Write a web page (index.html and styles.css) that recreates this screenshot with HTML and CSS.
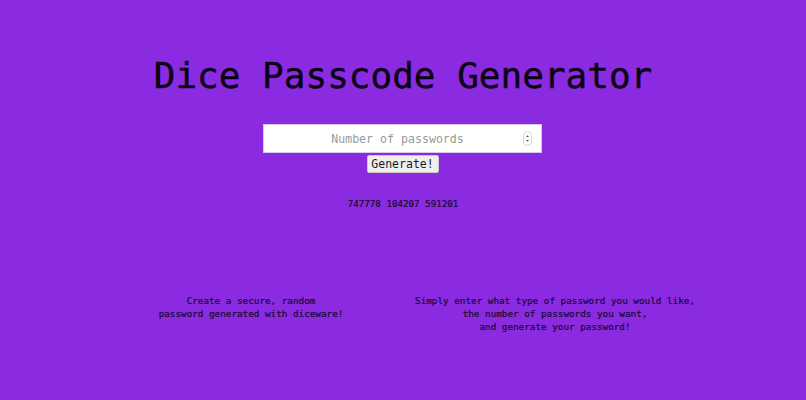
FILE: index.html
```html
<!DOCTYPE html>
<html lang="en">
<head>
    <meta charset="UTF-8">
    <meta name="viewport" content="width=device-width, initial-scale=1.0">
    <title>Dice Passcode Generator</title>
    <link rel="stylesheet" href="styles.css">
</head>
<body>
    <div id="main">
        <h1 class="title">Dice Passcode Generator</h1>
        <!--输入框和按钮-->
        <div class="form">
            <div class="count-box">
                <input type="number" class="count" placeholder="Number of passwords">
                <!--上下箭头-->
                <svg class="spin" width="9" height="15" viewBox="0 0 9 15">
                    <rect x="0.5" y="0.5" width="8" height="14" rx="4" fill="#fff" stroke="#d4d4d4"/>
                    <path d="M3 6 L4.5 4.2 L6 6 Z" fill="#555"/>
                    <path d="M3 9 L4.5 10.8 L6 9 Z" fill="#555"/>
                </svg>
            </div>
            <button class="btn-generate">Generate!</button>
        </div>
        <!--生成结果-->
        <p class="result">747778 104207 591201</p>
        <!--下边两段说明-->
        <div class="info">
            <div class="info-item">Create a secure, random<br>password generated with diceware!</div>
            <div class="info-item">Simply enter what type of password you would like,<br>the number of passwords you want,<br>and generate your password!</div>
        </div>
    </div>
</body>
</html>
```

FILE: styles.css
```css
*{
    margin:0;padding:0;
    box-sizing: border-box;
}
body{
    background-color: #8a2be2;
    font-family: "DejaVu Sans Mono", "Liberation Mono", monospace;
    height:400px;
}
#main{
    padding-top:56px;
    text-align: center;
}
.title{
    font-size:36px;
    line-height:40px;
    font-weight: normal;
    color:#0a0312;
    -webkit-text-stroke:0.4px #0a0312;
}
.form{
    margin-top:28px;
    display: flex;
    flex-direction: column;
    align-items: center;
    gap:2px;
}
.count-box{
    position: relative;
    width:279px;
    height:29px;
    margin-right:1px;
}
.count{
    width:100%;
    height:100%;
    border:1px solid #d9c8ee;
    background:#fff;
    font-family: inherit;
    font-size:11.6px;
    text-align: center;
    color:#333;
    padding:0 15px 0 5px;
    outline: none;
    -moz-appearance: textfield;
}
.count::-webkit-inner-spin-button,
.count::-webkit-outer-spin-button{
    -webkit-appearance: none;
    margin:0;
}
.count::placeholder{
    color:#9a9a9a;
}
.spin{
    position: absolute;
    right:10px;
    top:7px;
    pointer-events: none;
}
.btn-generate{
    width:72px;
    height:18px;
    margin-right:1px;
    font-family: inherit;
    font-size:11.5px;
    line-height:16px;
    color:#1a1a1a;
    background:#efefef;
    border:1px solid #c8c8c8;
    border-radius:2px;
    cursor: pointer;
}
.result{
    margin-top:25px;
    font-size:9.2px;
    line-height:12px;
    color:#1a0830;
    -webkit-text-stroke:0.2px #1a0830;
}
.info{
    margin-top:84px;
    display: flex;
    justify-content: center;
    gap:4px;
}
.info-item{
    width:300px;
    font-size:9.3px;
    line-height:13px;
    color:#1a0830;
    -webkit-text-stroke:0.2px #1a0830;
}
```
